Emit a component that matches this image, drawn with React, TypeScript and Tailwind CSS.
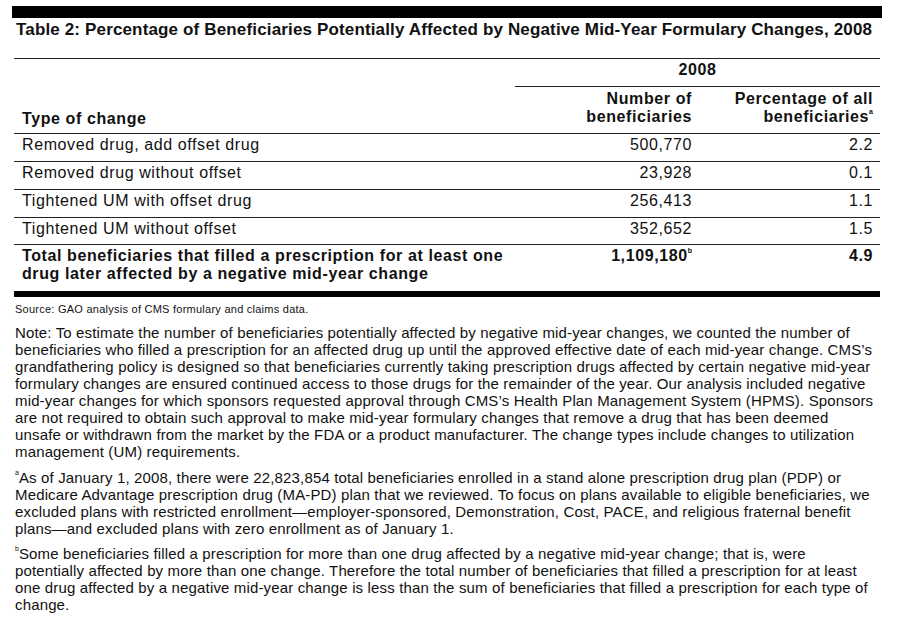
const rows = [
  { type: "Removed drug, add offset drug", num: "500,770", pct: "2.2" },
  { type: "Removed drug without offset", num: "23,928", pct: "0.1" },
  { type: "Tightened UM with offset drug", num: "256,413", pct: "1.1" },
  { type: "Tightened UM without offset", num: "352,652", pct: "1.5" },
];

const note = [
  "Note: To estimate the number of beneficiaries potentially affected by negative mid-year changes, we counted the number of",
  "beneficiaries who filled a prescription for an affected drug up until the approved effective date of each mid-year change. CMS’s",
  "grandfathering policy is designed so that beneficiaries currently taking prescription drugs affected by certain negative mid-year",
  "formulary changes are ensured continued access to those drugs for the remainder of the year. Our analysis included negative",
  "mid-year changes for which sponsors requested approval through CMS’s Health Plan Management System (HPMS). Sponsors",
  "are not required to obtain such approval to make mid-year formulary changes that remove a drug that has been deemed",
  "unsafe or withdrawn from the market by the FDA or a product manufacturer. The change types include changes to utilization",
  "management (UM) requirements.",
];

const footA = [
  "As of January 1, 2008, there were 22,823,854 total beneficiaries enrolled in a stand alone prescription drug plan (PDP) or",
  "Medicare Advantage prescription drug (MA-PD) plan that we reviewed. To focus on plans available to eligible beneficiaries, we",
  "excluded plans with restricted enrollment—employer-sponsored, Demonstration, Cost, PACE, and religious fraternal benefit",
  "plans—and excluded plans with zero enrollment as of January 1.",
];

const footB = [
  "Some beneficiaries filled a prescription for more than one drug affected by a negative mid-year change; that is, were",
  "potentially affected by more than one change. Therefore the total number of beneficiaries that filled a prescription for at least",
  "one drug affected by a negative mid-year change is less than the sum of beneficiaries that filled a prescription for each type of",
  "change.",
];

function Sup({ children }: { children: string }) {
  return <sup className="relative top-[-2px] align-super text-[7px] leading-none tracking-normal">{children}</sup>;
}

function Lines({ lines, mark }: { lines: string[]; mark?: string }) {
  return (
    <>
      {lines.map((l, i) => (
        <span key={i} className="block whitespace-nowrap">
          {i === 0 && mark ? <Sup>{mark}</Sup> : null}
          {l}
        </span>
      ))}
    </>
  );
}

export default function App() {
  return (
    <div className="min-h-[625px] bg-white font-['Liberation_Sans',Arial,sans-serif] text-[#111]">
      <div className="ml-[12px] w-[870px] pt-[6px]">
        <div className="h-[12px] bg-black" />
        <h1 className="pl-[4px] pt-[2px] text-[17px] font-bold leading-[20px] tracking-[0.15px]">
          Table 2: Percentage of Beneficiaries Potentially Affected by Negative Mid-Year Formulary Changes, 2008
        </h1>

        <div className="ml-[2px] mt-[18px] w-[866px] text-[16px] leading-[18px] tracking-[0.6px]">
          {/* header */}
          <div className="flex border-t border-[#222]">
            <div className="flex w-[501px] flex-col justify-end pb-[5px] pl-[8px] font-bold">Type of change</div>
            <div className="flex-1">
              <div className="h-[27px] pt-[2px] text-center font-bold">2008</div>
              <div className="flex h-[47px] border-t border-[#222] pt-[3px] font-bold">
                <div className="w-[177px] text-right">
                  Number of
                  <br />
                  beneficiaries
                </div>
                <div className="w-[181px] text-right">
                  Percentage of all
                  <br />
                  beneficiaries
                  <Sup>a</Sup>
                </div>
              </div>
            </div>
          </div>

          {rows.map((r, i) => (
            <div key={r.type} className={`flex border-t border-[#222] pt-[2px] ${i === 3 ? "h-[27px]" : "h-[28px]"}`}>
              <div className="w-[501px] pl-[8px]">{r.type}</div>
              <div className="w-[177px] text-right">{r.num}</div>
              <div className="w-[181px] text-right">{r.pct}</div>
            </div>
          ))}

          <div className="flex h-[47px] border-t border-[#222] pt-[2px] font-bold">
            <div className="w-[501px] pl-[8px]">
              Total beneficiaries that filled a prescription for at least one
              <br />
              drug later affected by a negative mid-year change
            </div>
            <div className="w-[177px] text-right">
              1,109,180
              <Sup>b</Sup>
            </div>
            <div className="w-[181px] text-right">4.9</div>
          </div>
          <div className="h-[6px] bg-black" />
        </div>

        <div className="pl-[3px]">
          <p className="mt-[6px] text-[11px] leading-[13px] tracking-[0.25px]">
            Source: GAO analysis of CMS formulary and claims data.
          </p>
          <p className="mt-[8px] text-[15px] leading-[17px] tracking-[0.15px]">
            <Lines lines={note} />
          </p>
          <p className="mt-[9px] text-[15px] leading-[17px] tracking-[0.15px]">
            <Lines lines={footA} mark="a" />
          </p>
          <p className="mt-[8px] text-[15px] leading-[17px] tracking-[0.15px]">
            <Lines lines={footB} mark="b" />
          </p>
        </div>
      </div>
    </div>
  );
}
